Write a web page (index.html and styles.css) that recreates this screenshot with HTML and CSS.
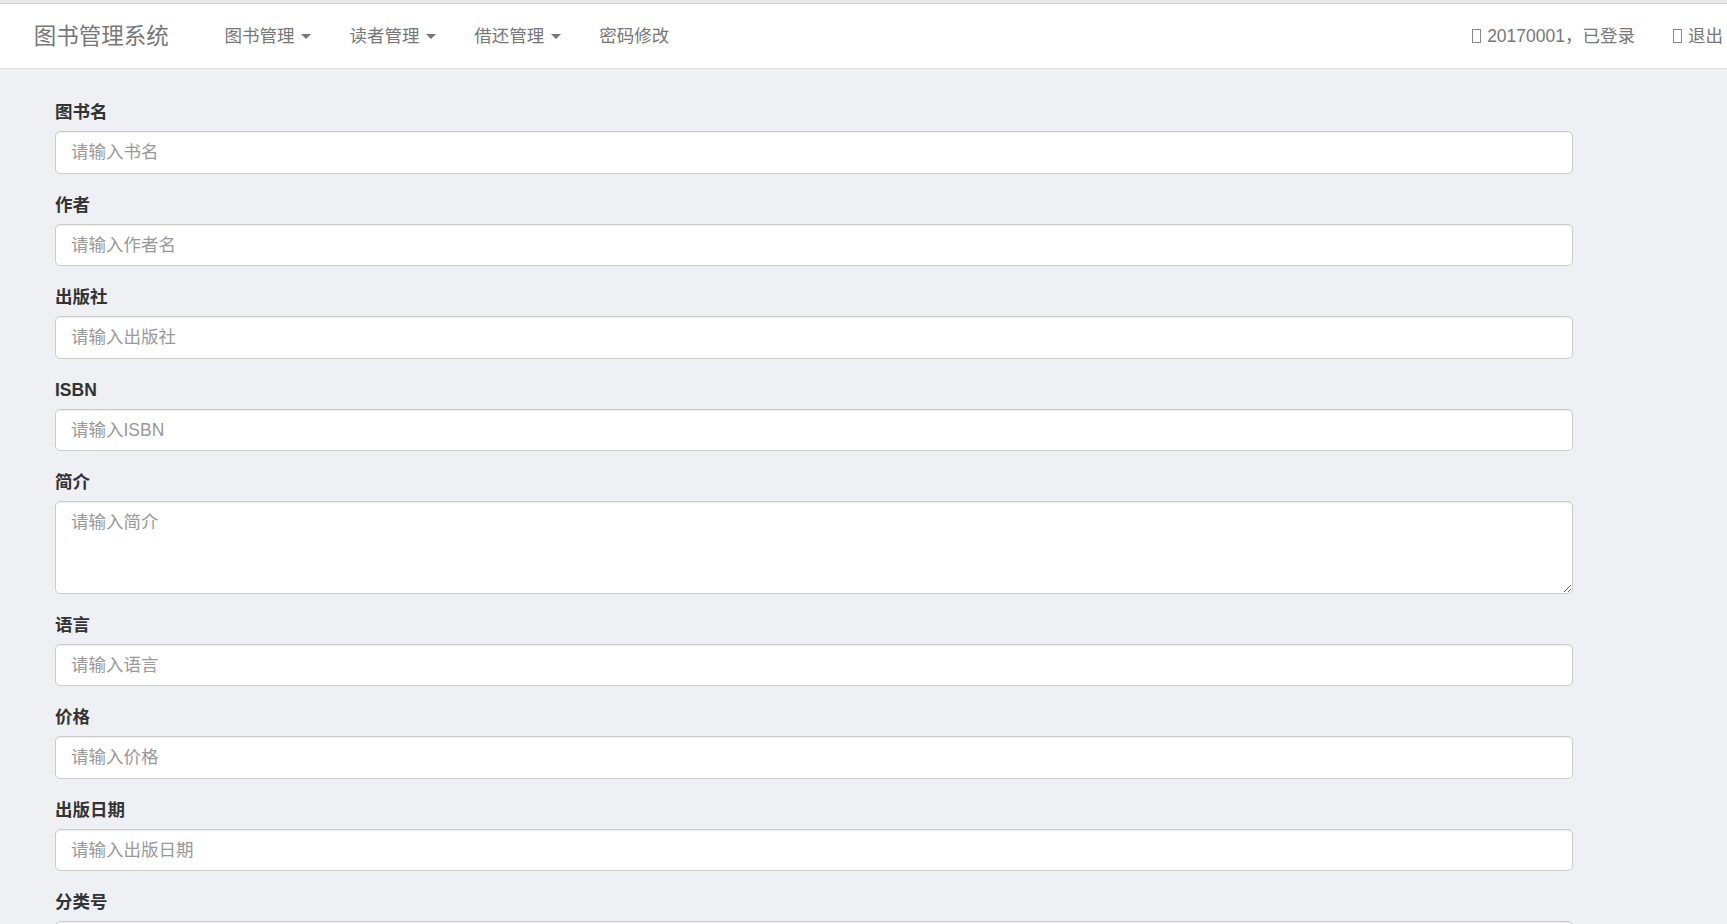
FILE: index.html
```html
<!DOCTYPE html>
<html lang="zh-CN">
<head>
    <meta charset="UTF-8">
    <meta name="viewport" content="width=device-width, initial-scale=1.0">
    <title>添加图书</title>
    <link rel="stylesheet" href="styles.css">
</head>
<body>
    <div class="topbar"></div>
    <nav class="navbar">
        <a class="brand" href="#">图书管理系统</a>
        <ul class="nav">
            <li><a href="#">图书管理 <span class="caret"></span></a></li>
            <li><a href="#">读者管理 <span class="caret"></span></a></li>
            <li><a href="#">借还管理 <span class="caret"></span></a></li>
            <li><a href="#">密码修改</a></li>
        </ul>
        <ul class="nav nav-right">
            <li><a href="#"><span class="icon"></span>20170001，已登录</a></li>
            <li><a href="#"><span class="icon"></span>退出</a></li>
        </ul>
    </nav>

    <div class="container">
        <form>
            <div class="form-group">
                <label for="name">图书名</label>
                <input type="text" class="form-control" id="name" placeholder="请输入书名">
            </div>
            <div class="form-group">
                <label for="author">作者</label>
                <input type="text" class="form-control" id="author" placeholder="请输入作者名">
            </div>
            <div class="form-group">
                <label for="publish">出版社</label>
                <input type="text" class="form-control" id="publish" placeholder="请输入出版社">
            </div>
            <div class="form-group">
                <label for="isbn">ISBN</label>
                <input type="text" class="form-control" id="isbn" placeholder="请输入ISBN">
            </div>
            <div class="form-group">
                <label for="introduction">简介</label>
                <textarea class="form-control" rows="3" id="introduction" placeholder="请输入简介"></textarea>
            </div>
            <div class="form-group">
                <label for="language">语言</label>
                <input type="text" class="form-control" id="language" placeholder="请输入语言">
            </div>
            <div class="form-group">
                <label for="price">价格</label>
                <input type="text" class="form-control" id="price" placeholder="请输入价格">
            </div>
            <div class="form-group">
                <label for="pubdate">出版日期</label>
                <input type="text" class="form-control" id="pubdate" placeholder="请输入出版日期">
            </div>
            <div class="form-group">
                <label for="classId">分类号</label>
                <input type="text" class="form-control" id="classId" placeholder="请输入分类号">
            </div>
            <div class="form-group">
                <label for="number">数量</label>
                <input type="text" class="form-control" id="number" placeholder="请输入图书数量">
            </div>
            <button type="submit" class="btn">添加</button>
        </form>
    </div>
</body>
</html>
```

FILE: styles.css
```css
html, body {
    overflow-x: hidden;
}
body {
    margin: 0;
    padding: 0;
    font-family: "Liberation Sans", Arial, "Noto Sans CJK SC", sans-serif;
    font-size: 17.5px;
    line-height: 25px;
    color: #333;
    background-color: #eff0f4;
}
.topbar {
    height: 3px;
    background-color: #e9e9e9;
    border-bottom: 1px solid #cfcfcf;
}
.navbar {
    display: flex;
    align-items: center;
    height: 65px;
    box-sizing: border-box;
    background-color: #fff;
    border-bottom: 1px solid #e2e2e4;
    padding-left: 15px;
}
.navbar a {
    text-decoration: none;
    color: #777;
}
.brand {
    font-size: 22.5px;
    padding: 0 18.75px;
    margin-right: 18px;
    white-space: nowrap;
}
.nav {
    display: flex;
    list-style: none;
    margin: 0;
    padding: 0;
}
.nav a {
    display: block;
    padding: 0 19px;
    white-space: nowrap;
}
.nav-right {
    margin-left: auto;
    margin-right: -15px;
}
.caret {
    display: inline-block;
    width: 0;
    height: 0;
    margin-left: 2px;
    vertical-align: middle;
    border-top: 5px solid #777;
    border-left: 5px solid transparent;
    border-right: 5px solid transparent;
}
.icon {
    display: inline-block;
    width: 7px;
    height: 12px;
    border: 1px solid #888;
    margin-right: 6px;
    vertical-align: -1px;
}
.container {
    width: 1518px;
    margin-left: 55px;
    padding-top: 31px;
}
.form-group {
    margin-bottom: 18.75px;
}
label {
    display: block;
    font-weight: bold;
    margin-bottom: 6.25px;
}
.form-control {
    display: block;
    width: 100%;
    height: 42.5px;
    box-sizing: border-box;
    padding: 7.5px 15px;
    font-family: inherit;
    font-size: 17.5px;
    line-height: 25px;
    color: #555;
    background-color: #fff;
    border: 1.25px solid #ccc;
    border-radius: 5px;
    box-shadow: inset 0 1px 1px rgba(0, 0, 0, 0.075);
}
.form-control::placeholder {
    color: #999;
}
textarea.form-control {
    height: 92.5px;
    resize: vertical;
}
.btn {
    font-family: inherit;
    font-size: 17.5px;
    color: #fff;
    background-color: #337ab7;
    border: 1px solid #2e6da4;
    border-radius: 5px;
    padding: 7.5px 15px;
}
```
